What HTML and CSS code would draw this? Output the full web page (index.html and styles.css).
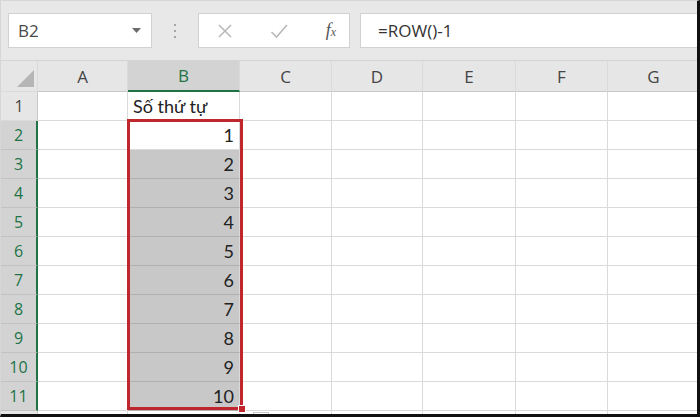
FILE: index.html
```html
<!DOCTYPE html>
<html lang="vi">

<head>
    <meta charset="UTF-8">
    <meta name="viewport" content="width=device-width, initial-scale=1.0">
    <title>Số thứ tự - Excel</title>
    <link rel="stylesheet" href="styles.css">
</head>

<body>
    <div class="window">
        <div class="formula-bar">
            <div class="name-box">
                <span>B2</span>
                <svg class="caret" width="9" height="5" viewBox="0 0 9 5"><path d="M0 0h9L4.5 5z" fill="#6b6b6b"/></svg>
            </div>
            <div class="grip"><i></i><i></i><i></i></div>
            <div class="bar-buttons">
                <svg width="16" height="16" viewBox="0 0 16 16"><path d="M2 2l12 12M14 2L2 14" stroke="#b9b9b9" stroke-width="1.6" fill="none"/></svg>
                <svg width="18" height="16" viewBox="0 0 18 16"><path d="M1.5 9l5 5L17 2" stroke="#b9b9b9" stroke-width="1.6" fill="none"/></svg>
                <span class="fx">f<small>x</small></span>
            </div>
            <div class="formula-input">=ROW()-1</div>
        </div>

        <div class="sheet">
            <div class="grid">
                <div class="corner"><svg width="17" height="17" viewBox="0 0 17 17"><path d="M17 0v17H0z" fill="#b5b5b5"/></svg></div>
                <div class="col-head">A</div>
                <div class="col-head active">B</div>
                <div class="col-head">C</div>
                <div class="col-head">D</div>
                <div class="col-head">E</div>
                <div class="col-head">F</div>
                <div class="col-head">G</div>

                <div class="row-head">1</div>
                <div class="cell"></div><div class="cell text">Số thứ tự</div><div class="cell"></div><div class="cell"></div><div class="cell"></div><div class="cell"></div><div class="cell"></div>

                <div class="row-head active">2</div>
                <div class="cell"></div><div class="cell num current">1</div><div class="cell"></div><div class="cell"></div><div class="cell"></div><div class="cell"></div><div class="cell"></div>

                <div class="row-head active">3</div>
                <div class="cell"></div><div class="cell num selected">2</div><div class="cell"></div><div class="cell"></div><div class="cell"></div><div class="cell"></div><div class="cell"></div>

                <div class="row-head active">4</div>
                <div class="cell"></div><div class="cell num selected">3</div><div class="cell"></div><div class="cell"></div><div class="cell"></div><div class="cell"></div><div class="cell"></div>

                <div class="row-head active">5</div>
                <div class="cell"></div><div class="cell num selected">4</div><div class="cell"></div><div class="cell"></div><div class="cell"></div><div class="cell"></div><div class="cell"></div>

                <div class="row-head active">6</div>
                <div class="cell"></div><div class="cell num selected">5</div><div class="cell"></div><div class="cell"></div><div class="cell"></div><div class="cell"></div><div class="cell"></div>

                <div class="row-head active">7</div>
                <div class="cell"></div><div class="cell num selected">6</div><div class="cell"></div><div class="cell"></div><div class="cell"></div><div class="cell"></div><div class="cell"></div>

                <div class="row-head active">8</div>
                <div class="cell"></div><div class="cell num selected">7</div><div class="cell"></div><div class="cell"></div><div class="cell"></div><div class="cell"></div><div class="cell"></div>

                <div class="row-head active">9</div>
                <div class="cell"></div><div class="cell num selected">8</div><div class="cell"></div><div class="cell"></div><div class="cell"></div><div class="cell"></div><div class="cell"></div>

                <div class="row-head active">10</div>
                <div class="cell"></div><div class="cell num selected">9</div><div class="cell"></div><div class="cell"></div><div class="cell"></div><div class="cell"></div><div class="cell"></div>

                <div class="row-head active">11</div>
                <div class="cell"></div><div class="cell num selected">10</div><div class="cell"></div><div class="cell"></div><div class="cell"></div><div class="cell"></div><div class="cell"></div>

                <div class="row-head"></div>
                <div class="cell"></div><div class="cell"></div><div class="cell"></div><div class="cell"></div><div class="cell"></div><div class="cell"></div><div class="cell"></div>
            </div>

            <!-- selection outline drawn over B2:B11 -->
            <div class="selection-box"></div>
            <div class="fill-handle"></div>
            <div class="autofill-btn"></div>
        </div>
    </div>
</body>

</html>
```

FILE: styles.css
```css
html,
body {
    margin: 0;
    padding: 0;
}

body {
    width: 700px;
    height: 417px;
    overflow: hidden;
    background: #fff;
    font-family: "Open Sans", "Noto Sans", sans-serif;
    color: #444;
}

.window {
    width: 700px;
    height: 417px;
    box-sizing: border-box;
    border-top: 1px solid #d6d6d6;
    border-left: 1px solid #d6d6d6;
    border-right: 3px solid #111;
    border-bottom: 3px solid #111;
    overflow: hidden;
    display: flex;
    flex-direction: column;
}

/* formula bar */
.formula-bar {
    height: 60px;
    flex: none;
    box-sizing: border-box;
    background: #e8e8e8;
    display: flex;
    align-items: flex-start;
    padding: 12px 0 0 7px;
    border-bottom: 1px solid #d4d4d4;
}

.name-box {
    width: 144px;
    height: 35px;
    box-sizing: border-box;
    background: #fff;
    border: 1px solid #d2d2d2;
    display: flex;
    align-items: center;
    justify-content: space-between;
    padding: 0 10px 0 9px;
    font-size: 17px;
    color: #4a4a4a;
}

.grip {
    width: 46px;
    height: 35px;
    display: flex;
    flex-direction: column;
    align-items: center;
    justify-content: center;
    gap: 4px;
}

.grip i {
    display: block;
    width: 2px;
    height: 2px;
    background: #a5a5a5;
}

.bar-buttons {
    width: 152px;
    height: 35px;
    box-sizing: border-box;
    background: #fff;
    border: 1px solid #d2d2d2;
    display: flex;
    align-items: center;
    justify-content: space-between;
    padding: 0 13px 0 18px;
}

.fx {
    font-family: "Liberation Serif", serif;
    font-style: italic;
    font-size: 18px;
    color: #555;
}

.fx small {
    font-size: 12px;
}

.formula-input {
    flex: 1;
    height: 35px;
    margin-left: 10px;
    box-sizing: border-box;
    background: #fff;
    border: 1px solid #d2d2d2;
    border-right: none;
    padding-left: 17px;
    line-height: 33px;
    font-size: 17px;
    color: #333;
}

/* sheet grid */
.sheet {
    position: relative;
    flex: 1;
}

.grid {
    display: grid;
    grid-template-columns: 37px 90px 112px 92px 91px 93px 92px 92px;
    grid-template-rows: 31px repeat(11, 29px) 29px;
}

.grid > div {
    box-sizing: border-box;
    border-right: 1px solid #dadada;
    border-bottom: 1px solid #dadada;
}

.corner {
    background: #e6e6e6;
    display: flex;
    align-items: flex-end;
    justify-content: flex-end;
    padding: 0 3px 4px 0;
}

.col-head {
    background: #e6e6e6;
    display: flex;
    align-items: center;
    justify-content: center;
    font-size: 17px;
    color: #444;
    border-bottom-color: #c8c8c8 !important;
}

.col-head.active {
    background: #d3d3d3;
    color: #217346;
    border-bottom: 2px solid #217346 !important;
}

.row-head {
    background: #e6e6e6;
    display: flex;
    align-items: center;
    justify-content: center;
    font-size: 16px;
    color: #444;
    border-right-color: #c8c8c8 !important;
}

.row-head.active {
    background: #d3d3d3;
    color: #217346;
    border-right: 2px solid #217346 !important;
    border-bottom-color: #c2c2c2 !important;
}

.cell {
    background: #fff;
    font-family: "Lato", "Open Sans", sans-serif;
    font-size: 18px;
    color: #222;
    display: flex;
    align-items: center;
}

.cell.text {
    padding-left: 5px;
}

.cell.num {
    justify-content: flex-end;
    padding-right: 5px;
}

.cell.selected {
    background: #c8c8c8;
    border-bottom-color: #b0b0b0;
}

.selection-box {
    position: absolute;
    left: 126px;
    top: 58px;
    width: 116px;
    height: 291px;
    box-sizing: border-box;
    border: 3px solid #c0272d;
}

.fill-handle {
    position: absolute;
    left: 237px;
    top: 344px;
    width: 6px;
    height: 6px;
    background: #c0272d;
    border: 1px solid #fff;
}

.autofill-btn {
    position: absolute;
    left: 252px;
    top: 351px;
    width: 16px;
    height: 16px;
    box-sizing: border-box;
    border: 1px solid #c6c6c6;
    background: #fff;
}
```
